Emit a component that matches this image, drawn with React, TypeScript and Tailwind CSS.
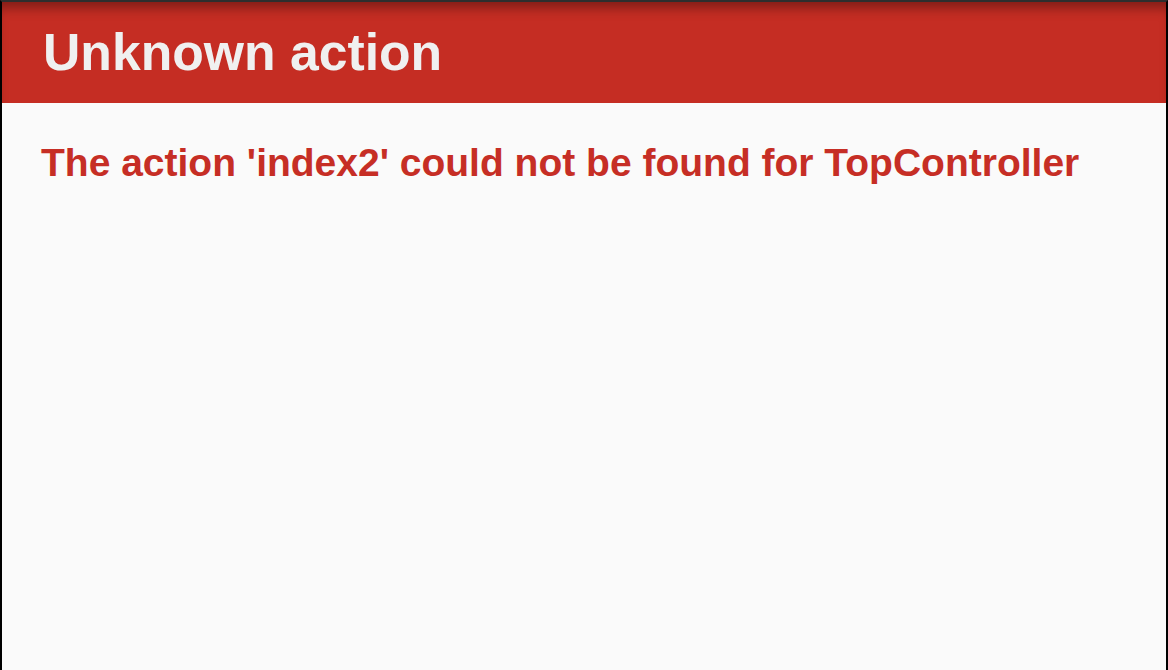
export default function App() {
  return (
    <div
      className="h-[670px] w-full overflow-hidden border-x-2 border-t-2 border-x-black border-t-[#2e2e2e] bg-[#fafafa]"
      style={{ fontFamily: '"Liberation Sans", Arial, sans-serif' }}
    >
      {/* Title bar */}
      <div className="flex h-[101px] items-center bg-[#c52d23] pl-[41px] shadow-[inset_0_12px_12px_-6px_rgba(0,0,0,0.35)]">
        <h1 className="text-[51.7px] font-bold leading-none text-[#f0f0f0]">Unknown action</h1>
      </div>

      {/* Message */}
      <div className="pl-[39px] pt-[40px]">
        <h2 className="text-[39px] font-bold leading-none text-[#c62e25]">
          The action 'index2' could not be found for TopController
        </h2>
      </div>
    </div>
  );
}
